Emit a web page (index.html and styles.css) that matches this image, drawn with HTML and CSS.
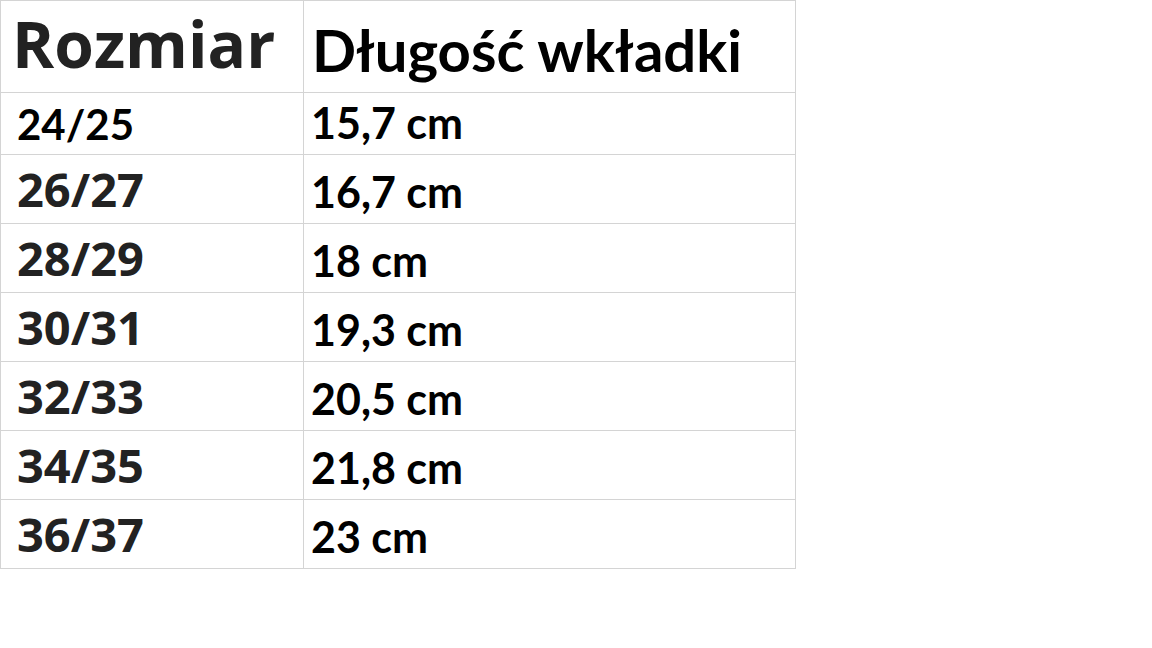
FILE: index.html
```html
<!DOCTYPE html>
<html lang="pl">
<head>
<meta charset="utf-8">
<title>Rozmiar</title>
<link rel="stylesheet" href="styles.css">
</head>
<body>
<table class="sizes">
  <colgroup><col class="c1"><col class="c2"></colgroup>
  <tr class="head">
    <td class="h-left">Rozmiar</td>
    <td class="h-right">Długość wkładki</td>
  </tr>
  <tr class="first">
    <td class="v-left-small">24/25</td>
    <td class="v-right">15,7 cm</td>
  </tr>
  <tr class="row">
    <td class="v-left">26/27</td>
    <td class="v-right">16,7 cm</td>
  </tr>
  <tr class="row">
    <td class="v-left">28/29</td>
    <td class="v-right">18 cm</td>
  </tr>
  <tr class="row">
    <td class="v-left">30/31</td>
    <td class="v-right">19,3 cm</td>
  </tr>
  <tr class="row">
    <td class="v-left">32/33</td>
    <td class="v-right">20,5 cm</td>
  </tr>
  <tr class="row">
    <td class="v-left">34/35</td>
    <td class="v-right">21,8 cm</td>
  </tr>
  <tr class="row">
    <td class="v-left">36/37</td>
    <td class="v-right">23 cm</td>
  </tr>
</table>
</body>
</html>
```
FILE: styles.css
```css
html, body {
  margin: 0;
  padding: 0;
  background: #ffffff;
}
.sizes {
  border-collapse: collapse;
  table-layout: fixed;
  width: 795px;
}
.c1 { width: 303px; }
.c2 { width: 492px; }
.sizes td {
  border: 1px solid #d4d4d4;
  vertical-align: bottom;
  padding: 0;
  line-height: 1;
  white-space: nowrap;
  font-weight: 700;
}
.head { height: 92px; }
.first { height: 62px; }
.row { height: 69px; }
.h-left {
  font-family: "Open Sans", sans-serif;
  font-size: 64px;
  color: #222222;
  padding: 0 0 16px 11px !important;
}
.h-right {
  font-family: Lato, sans-serif;
  font-size: 58px;
  color: #000000;
  padding: 0 0 13px 8px !important;
}
.v-left-small {
  font-family: Lato, sans-serif;
  font-size: 42px;
  color: #000000;
  padding: 0 0 9px 16px !important;
}
.v-left {
  font-family: "Open Sans", sans-serif;
  font-size: 47px;
  color: #222222;
  padding: 0 0 10px 16px !important;
}
.v-right {
  font-family: Lato, sans-serif;
  font-size: 43px;
  color: #000000;
  padding: 0 0 10px 7px !important;
}
```
